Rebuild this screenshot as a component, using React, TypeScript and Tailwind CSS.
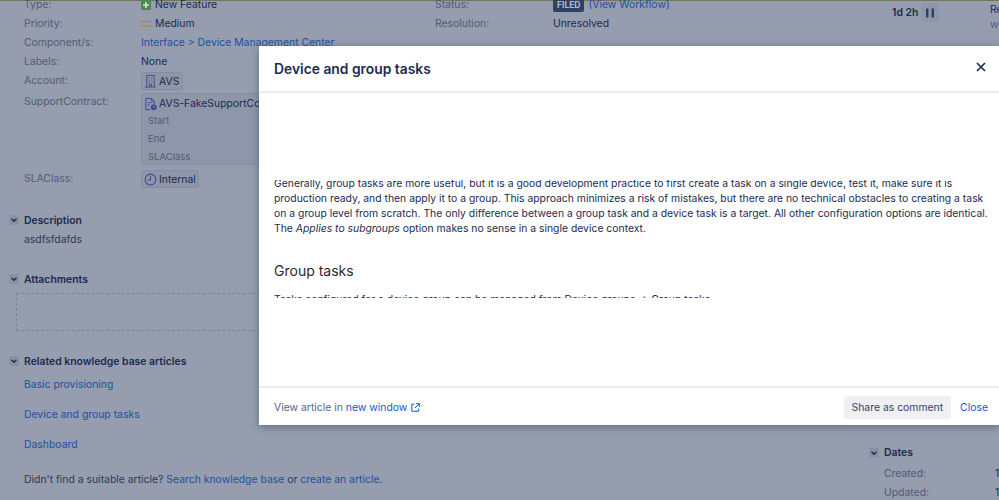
import React from "react";

const Chevron = () => (
  <span className="flex h-[10px] w-[10px] items-center justify-center rounded-[2px] bg-[#8891a6]">
    <svg width="8" height="8" viewBox="0 0 8 8" fill="none" stroke="#1d2b4f" strokeWidth="1.4"><path d="M1.5 2.8 4 5.3l2.5-2.5" /></svg>
  </span>
);

function Row({ label, className = "", children }: { label: string; className?: string; children: React.ReactNode }) {
  return (
    <div className={`flex ${className}`}>
      <div className="w-[117px] shrink-0 text-[#505c78]">{label}</div>
      <div className="min-w-0 flex-1 whitespace-nowrap text-[#1d2b4f]">{children}</div>
    </div>
  );
}

function SectionTitle({ children, className = "" }: { children: React.ReactNode; className?: string }) {
  return (
    <div className={`-ml-[15px] flex h-[15px] items-center gap-[5px] font-semibold text-[#1d2b4f] ${className}`}>
      <Chevron />
      <span>{children}</span>
    </div>
  );
}

const Building = () => (
  <svg width="13" height="14" viewBox="0 0 14 15" fill="none" stroke="#3d4a94" strokeWidth="1"><path d="M3 14V1.5h8V14M1 14h12" /><path d="M5 4h1M8 4h1M5 6.5h1M8 6.5h1M5 9h1M8 9h1M6 14v-3h2v3" /></svg>
);
const ContractIcon = () => (
  <svg width="13" height="14" viewBox="0 0 14 15" fill="none" stroke="#3d4a94" strokeWidth="1"><path d="M7 13.5H2V1.5h6l3 3v3" /><path d="M8 1.5v3h3M4 6h4M4 8.5h2" /><circle cx="10.5" cy="11" r="2.8" fill="#3d4a94" /><path d="M10.5 9.8V11l.9.6" stroke="#aab" /></svg>
);
const Clock = () => (
  <svg width="13" height="13" viewBox="0 0 14 14" fill="none" stroke="#3d4a94" strokeWidth="1.1"><circle cx="7" cy="7" r="5.8" /><path d="M7 3.5V7.5H4" /></svg>
);

export default function App() {
  return (
    <div className="relative h-[500px] w-[999px] overflow-hidden bg-[#959dae] text-[10.4px] leading-[15px]" style={{ fontFamily: "Inter, 'Noto Sans', sans-serif" }}>
      <div className="h-px bg-[#74765c]" />
      <div className="flex">
        <div className="w-[435px] shrink-0 pl-6">
          <div className="-mt-[4px] flex flex-col gap-1">
            <Row label="Type:"><span className="flex items-center gap-[4px]"><span className="flex h-[10px] w-[10px] items-center justify-center rounded-[1px] bg-[#4c8a56] text-[#d9e2dc]"><svg width="8" height="8" viewBox="0 0 8 8" stroke="currentColor" strokeWidth="1.6"><path d="M4 1v6M1 4h6" /></svg></span>New Feature</span></Row>
            <Row label="Priority:"><span className="flex items-center gap-[4px]"><svg width="10" height="8" viewBox="0 0 10 8" stroke="#b5824a" strokeWidth="1.3"><path d="M0 1.5h10M0 6h10" /></svg>Medium</span></Row>
            <Row label="Component/s:"><span className="text-[#2350a0]">Interface &gt; Device Management Center</span></Row>
            <Row label="Labels:">None</Row>
            <Row label="Account:">
              <span className="-mt-[1px] inline-flex h-[18px] items-center gap-[2px] rounded-[3px] border border-[#848da1] bg-[#8e96a9] pl-[2px] pr-[3px]"><Building />AVS</span>
            </Row>
            <Row label="SupportContract:" className="-mt-[2px]">
              <div className="-mt-[1px] h-[72px] w-[200px] rounded-[3px] border border-[#848da1] bg-[#8e96a9]">
                <div className="flex h-[19px] items-center gap-[2px] pl-[2px]"><ContractIcon />AVS-FakeSupportContract</div>
                <div className="flex flex-col gap-[3px] pl-[6px] text-[9.5px] text-[#505c78]">
                  <div>Start</div><div>End</div><div>SLAClass</div>
                </div>
              </div>
            </Row>
            <Row label="SLAClass:" className="mt-[2px]">
              <span className="-mt-[1px] inline-flex h-[18px] items-center gap-[2px] rounded-[3px] border border-[#848da1] bg-[#8e96a9] pl-[2px] pr-[2px]"><Clock />Internal</span>
            </Row>
          </div>
          <SectionTitle className="mt-[23px]">Description</SectionTitle>
          <div className="mt-1 text-[#2c3958]">asdfsfdafds</div>
          <SectionTitle className="mt-[25px]">Attachments</SectionTitle>
          <div className="-ml-2 mt-[6px] h-[38px] w-[300px] border border-dashed border-[#7a8398]" />
          <SectionTitle className="mt-[23px]">Related knowledge base articles</SectionTitle>
          <div className="mt-[8px] flex flex-col gap-[15px] text-[#2350a0]">
            <div>Basic provisioning</div>
            <div>Device and group tasks</div>
            <div>Dashboard</div>
          </div>
          <div className="mt-5 whitespace-nowrap text-[#2c3958]">Didn't find a suitable article? <span className="text-[#2350a0]">Search knowledge base</span> or <span className="text-[#2350a0]">create an article</span>.</div>
        </div>
        <div className="w-[434px] shrink-0">
          <div className="-mt-[4px] flex flex-col gap-1">
            <div className="flex">
              <div className="w-[118px] text-[#505c78]">Status:</div>
              <div className="flex items-center gap-[4px] text-[#2350a0]"><span className="rounded-[2px] bg-[#2f4066] px-[4px] text-[8.5px] font-bold leading-[14px] text-[#b4bccd]">FILED</span>(View Workflow)</div>
            </div>
            <div className="flex">
              <div className="w-[118px] text-[#505c78]">Resolution:</div>
              <div className="text-[#1d2b4f]">Unresolved</div>
            </div>
          </div>
        </div>
        <div className="flex-1">
          <div className="flex">
            <div className="flex w-[71px] shrink-0 items-center gap-[3px] self-start whitespace-nowrap pl-[23px] pt-[2px]">
              <span className="font-semibold text-[#1d2b4f]">1d 2h</span>
              <span className="flex h-[19px] w-[18px] shrink-0 items-center justify-center rounded-[3px] bg-[#8e96a9]">
                <svg width="10" height="10" viewBox="0 0 10 10" fill="#2f3f68"><rect x="1" y="0.5" width="2.4" height="9" /><rect x="6.6" y="0.5" width="2.4" height="9" /></svg>
              </span>
            </div>
            <div className="ml-[50px] whitespace-nowrap pt-px">
              <div className="text-[#1d2b4f]">Re</div>
              <div className="text-[#505c78]">w</div>
            </div>
          </div>
          <div className="pl-[15px] pt-[413px]">
            <SectionTitle>Dates</SectionTitle>
            <div className="mt-[6px] flex flex-col gap-1">
              <div className="flex"><span className="w-[111px] shrink-0 text-[#505c78]">Created:</span><span className="text-[#1d2b4f]">1</span></div>
              <div className="flex"><span className="w-[111px] shrink-0 text-[#505c78]">Updated:</span><span className="text-[#1d2b4f]">1</span></div>
            </div>
          </div>
        </div>
      </div>

      <div className="absolute left-[259px] top-[46px] flex h-[379px] w-[740px] flex-col bg-white shadow-[0_2px_8px_rgba(40,50,80,0.45)]">
        <div className="flex h-[47px] shrink-0 items-center justify-between border-b-2 border-[#ecedf2] pl-[15px] pr-[13px]">
          <div className="pt-[2px] text-[13.85px] font-semibold text-[#1d2b4f]">Device and group tasks</div>
          <svg className="-mt-[3px]" width="10" height="10" viewBox="0 0 10 10" stroke="#1d2b4f" strokeWidth="1.7"><path d="m1 1 8 8M9 1 1 9" /></svg>
        </div>
        <div className="h-[87px] shrink-0" />
        <div className="h-[118px] shrink-0 overflow-hidden pl-[15px] pr-[8px] text-[10.38px] leading-[15px] text-[#1d2b4f]">
          <p className="-mt-[4px]">Generally, group tasks are more useful, but it is a good development practice to first create a task on a single device, test it, make sure it is production ready, and then apply it to a group. This approach minimizes a risk of mistakes, but there are no technical obstacles to creating a task on a group level from scratch. The only difference between a group task and a device task is a target. All other configuration options are identical. The <em>Applies to subgroups</em> option makes no sense in a single device context.</p>
          <h2 className="mt-[25px] text-[14px] font-normal leading-[20px] text-[#2b2b2b]">Group tasks</h2>
          <p className="mt-[11px] whitespace-nowrap">Tasks configured for a device group can be managed from Device groups → Group tasks</p>
        </div>
        <div className="flex-1" />
        <div className="flex h-[39px] shrink-0 items-center justify-between border-t-2 border-[#ecedf2] pl-[15px] pr-[11px] pt-px">
          <div className="flex items-center text-[#5a6580]">View article in&nbsp;<span className="text-[#0c5bd0]">new window</span>
            <svg className="ml-[4px]" width="9" height="9" viewBox="0 0 9 9" fill="none" stroke="#0c5bd0" strokeWidth="1"><path d="M3.5 1.2H.8v7h7V5.5M5 .7h3.3V4M8.3.7 4 5" /></svg>
          </div>
          <div className="flex items-center gap-[9px]">
            <span className="flex h-[23px] items-center rounded-[3px] bg-[#eef0f3] px-2 text-[#37435f]">Share as comment</span>
            <span className="text-[#0c5bd0]">Close</span>
          </div>
        </div>
      </div>
    </div>
  );
}
